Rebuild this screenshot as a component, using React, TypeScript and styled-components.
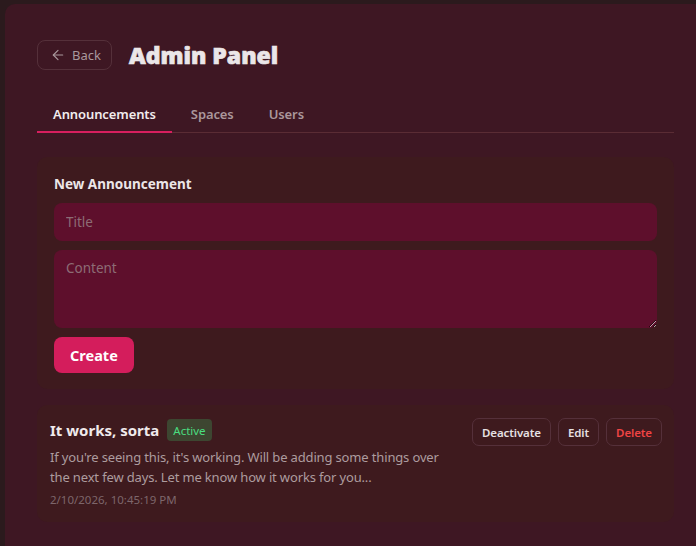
import styled, { createGlobalStyle } from "styled-components";
import { ArrowLeft } from "lucide-react";

const GlobalStyle = createGlobalStyle`
  html, body {
    margin: 0;
    padding: 0;
    background: #2b1a1d;
    font-family: "Noto Sans", "Open Sans", sans-serif;
    color: #e8e2e4;
  }
  * { box-sizing: border-box; }
`;

const Shell = styled.div`
  margin: 4px 0 0 5px;
  min-height: calc(100vh - 4px);
  background: #3e1723;
  border-top-left-radius: 10px;
  padding: 35px 22px 24px 32px;
`;

const Header = styled.header`
  display: flex;
  align-items: center;
  gap: 17px;
`;

const BackButton = styled.button`
  display: inline-flex;
  align-items: center;
  gap: 6px;
  height: 30px;
  padding: 0 10px 0 12px;
  background: transparent;
  border: 1px solid #55303a;
  border-radius: 8px;
  color: #a9999d;
  font-family: inherit;
  font-size: 13px;
  cursor: pointer;
`;

const Title = styled.h1`
  margin: 0;
  font-family: "Open Sans", sans-serif;
  font-weight: 800;
  font-size: 23px;
  -webkit-text-stroke: 0.7px #ebe6e8;
  color: #ebe6e8;
`;

const Tabs = styled.nav`
  display: flex;
  gap: 3px;
  margin-top: 23px;
  border-bottom: 1px solid #5a2c34;
`;

const Tab = styled.button<{ $active?: boolean }>`
  padding: 10px 16px 7px;
  margin-bottom: -1px;
  background: transparent;
  border: none;
  border-bottom: 2px solid ${(p) => (p.$active ? "#d81f5f" : "transparent")};
  color: ${(p) => (p.$active ? "#f1ecee" : "#ab979c")};
  font-family: inherit;
  font-size: 13px;
  letter-spacing: -0.1px;
  font-weight: 600;
  line-height: 20px;
  cursor: pointer;
`;

const Card = styled.section<{ $tight?: boolean }>`
  margin-top: ${(p) => (p.$tight ? "16px" : "24px")};
  background: #3e1a1e;
  border-radius: 10px;
  padding: ${(p) => (p.$tight ? "13px 12px 12px 13px" : "17px 17px 16px")};
`;

const CardHeading = styled.h2`
  margin: 0 0 9px;
  font-size: 13.5px;
  font-weight: 700;
  line-height: 20px;
  color: #ece6e8;
`;

const Form = styled.form`
  display: flex;
  flex-direction: column;
  align-items: flex-start;
  gap: 9px;
`;

const fieldStyles = `
  width: 100%;
  border: none;
  outline: none;
  border-radius: 8px;
  background: #5e0f2c;
  color: #ece6e8;
  font-family: "Noto Sans", "Open Sans", sans-serif;
  font-size: 13.5px;
  padding: 0 12px;
  &::placeholder { color: #8d6c75; }
`;

const TextInput = styled.input`
  ${fieldStyles}
  height: 38px;
`;

const TextArea = styled.textarea`
  ${fieldStyles}
  height: 78px;
  padding-top: 9px;
  resize: vertical;
`;

const PrimaryButton = styled.button`
  height: 36px;
  padding: 0 16px;
  border: none;
  border-radius: 8px;
  background: #d41d5c;
  color: #fff;
  font-family: inherit;
  font-size: 14.5px;
  font-weight: 700;
  cursor: pointer;
`;

const ItemRow = styled.div`
  display: flex;
  justify-content: space-between;
  align-items: flex-start;
  gap: 16px;
`;

const ItemBody = styled.div`
  flex: 0 1 400px;
`;

const ItemTitleRow = styled.div`
  display: flex;
  align-items: center;
  gap: 8px;
  height: 24px;
`;

const ItemTitle = styled.h3`
  margin: 0;
  font-size: 15px;
  font-weight: 700;
  color: #f0eaec;
`;

const Badge = styled.span`
  display: inline-flex;
  align-items: center;
  height: 22px;
  padding: 0 6px;
  border-radius: 4px;
  background: #3d4631;
  color: #4ade80;
  font-size: 11.5px;
`;

const ItemText = styled.p`
  margin: 5px 0 0;
  font-size: 13px;
  letter-spacing: -0.15px;
  line-height: 20px;
  color: #ad9c9f;
`;

const ItemDate = styled.div`
  margin-top: 3px;
  font-size: 11.5px;
  line-height: 20px;
  color: #7d666b;
`;

const Actions = styled.div`
  display: flex;
  gap: 7px;
  flex-shrink: 0;
`;

const ActionButton = styled.button<{ $danger?: boolean }>`
  height: 28px;
  padding: 0 9px;
  background: transparent;
  border: 1px solid #55303a;
  border-radius: 7px;
  color: ${(p) => (p.$danger ? "#ef4444" : "#e6e0e2")};
  font-family: inherit;
  font-size: 11.5px;
  letter-spacing: -0.1px;
  font-weight: 600;
  cursor: pointer;
`;

export default function App() {
  return (
    <>
      <GlobalStyle />
      <Shell>
        <Header>
          <BackButton>
            <ArrowLeft size={16} strokeWidth={1.75} />
            Back
          </BackButton>
          <Title>Admin Panel</Title>
        </Header>

        <Tabs>
          <Tab $active>Announcements</Tab>
          <Tab>Spaces</Tab>
          <Tab>Users</Tab>
        </Tabs>

        <Card>
          <CardHeading>New Announcement</CardHeading>
          <Form onSubmit={(e) => e.preventDefault()}>
            <TextInput placeholder="Title" />
            <TextArea placeholder="Content" />
            <PrimaryButton type="submit">Create</PrimaryButton>
          </Form>
        </Card>

        <Card $tight>
          <ItemRow>
            <ItemBody>
              <ItemTitleRow>
                <ItemTitle>It works, sorta</ItemTitle>
                <Badge>Active</Badge>
              </ItemTitleRow>
              <ItemText>
                If you're seeing this, it's working. Will be adding some things
                over the next few days. Let me know how it works for you...
              </ItemText>
              <ItemDate>2/10/2026, 10:45:19 PM</ItemDate>
            </ItemBody>
            <Actions>
              <ActionButton>Deactivate</ActionButton>
              <ActionButton>Edit</ActionButton>
              <ActionButton $danger>Delete</ActionButton>
            </Actions>
          </ItemRow>
        </Card>
      </Shell>
    </>
  );
}
